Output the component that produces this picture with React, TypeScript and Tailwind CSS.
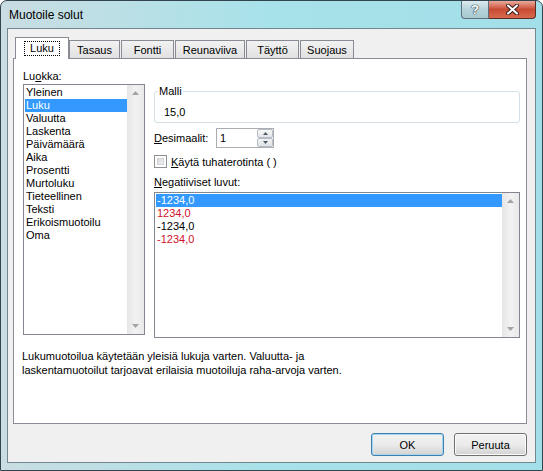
import React from "react";

const CATEGORIES = [
  "Yleinen",
  "Luku",
  "Valuutta",
  "Laskenta",
  "Päivämäärä",
  "Aika",
  "Prosentti",
  "Murtoluku",
  "Tieteellinen",
  "Teksti",
  "Erikoismuotoilu",
  "Oma",
];

const NEGATIVES = [
  { text: "-1234,0", red: false },
  { text: "1234,0", red: true },
  { text: "-1234,0", red: false },
  { text: "-1234,0", red: true },
];

const TABS = [
  { label: "Luku", w: "w-[54px]" },
  { label: "Tasaus", w: "w-[51px]" },
  { label: "Fontti", w: "w-[53px]" },
  { label: "Reunaviiva", w: "w-[70px]" },
  { label: "Täyttö", w: "w-[53px]" },
  { label: "Suojaus", w: "w-[54px]" },
];

function Arrow({ up }: { up: boolean }) {
  return (
    <svg width="7" height="4" viewBox="0 0 7 4">
      <path d={up ? "M0 4 L3.5 0 L7 4 Z" : "M0 0 L3.5 4 L7 0 Z"} fill="#a3a3a3" />
    </svg>
  );
}

function Scrollbar() {
  return (
    <div className="flex w-[17px] flex-col items-center justify-between bg-gradient-to-r from-[#e6e6e6] via-[#f2f2f2] to-[#e9e9e9] py-[6px]">
      <Arrow up />
      <Arrow up={false} />
    </div>
  );
}

function Tab({ label, w, active }: { label: string; w: string; active: boolean }) {
  if (active) {
    return (
      <div
        className={`${w} relative z-10 -mb-px flex h-[22px] items-start justify-center border border-b-0 border-[#898c95] bg-white pt-[4px]`}
      >
        <span className="px-[5px] leading-[13px] outline-1 outline-dotted outline-black">{label}</span>
      </div>
    );
  }
  return (
    <div
      className={`${w} mr-px flex h-[18px] items-center justify-center border border-b-0 border-[#898c95] bg-gradient-to-b from-[#f2f2f2] to-[#e1e1e1] pt-[1px]`}
    >
      {label}
    </div>
  );
}

function Button({ label, primary }: { label: string; primary?: boolean }) {
  return (
    <button
      className={`flex h-[23px] w-[73px] items-center justify-center rounded-[3px] border bg-gradient-to-b from-[#f2f2f2] via-[#ebebeb] to-[#d3d3d3] ${
        primary ? "border-[#3c7fb1] shadow-[inset_0_0_0_1px_#a7d5f0]" : "border-[#707070] shadow-[inset_0_0_0_1px_#fbfbfb]"
      }`}
    >
      {label}
    </button>
  );
}

export default function App() {
  return (
    <div className="h-[471px] w-[543px] bg-white font-['Liberation_Sans',Arial,sans-serif] text-[11px] leading-[14px] text-black">
      <div className="flex h-[471px] w-[543px] flex-col rounded-t-[7px] border border-[#33444e] bg-gradient-to-r from-[#c9dde2] via-[#a7e2ea] to-[#a3dfe8]">
        {/* Title bar */}
        <div className="flex h-[27px] items-start">
          <span className="ml-[8px] mt-[7px] text-[12px]">Muotoile solut</span>
          <div className="ml-auto mr-[6px] flex">
            <div className="flex h-[18px] w-[28px] items-center justify-center rounded-bl-[4px] border border-t-0 border-[#5d6f7c] bg-gradient-to-b from-[#dcebef] via-[#b7d3da] to-[#a8c8d0] text-[13px] font-bold text-white [text-shadow:0_0_1px_#2a3a48,0_0_1px_#2a3a48,0_0_1px_#2a3a48]">
              ?
            </div>
            <div className="flex h-[18px] w-[47px] items-center justify-center rounded-br-[4px] border border-l-0 border-t-0 border-[#5a2c25] bg-gradient-to-b from-[#e9a99b] via-[#c94a34] to-[#d86a4c]">
              <svg width="13" height="11" viewBox="0 0 13 11">
                <path d="M2 1.5 L11 9.5 M11 1.5 L2 9.5" stroke="#3a2320" strokeWidth="4" strokeLinecap="round" />
                <path d="M2 1.5 L11 9.5 M11 1.5 L2 9.5" stroke="#ffffff" strokeWidth="2" strokeLinecap="round" />
              </svg>
            </div>
          </div>
        </div>

        {/* Client area */}
        <div className="mx-[6px] h-[435px] border border-[#72878f] bg-[#f0f0f0]">
          {/* Tabs */}
          <div className="ml-[7px] mt-[8px] flex h-[21px] items-end">
            {TABS.map((t, i) => (
              <Tab key={t.label} label={t.label} w={t.w} active={i === 0} />
            ))}
          </div>

          {/* Panel */}
          <div className="ml-[5px] h-[366px] w-[514px] border border-[#898c95] bg-white">
            <div className="flex items-start">
              {/* Left column */}
              <div className="ml-[9px] flex w-[122px] flex-col pt-[10px]">
                <span>
                  Lu<span className="underline">o</span>kka:
                </span>
                <div className="mt-px flex h-[251px] border border-[#828790] bg-white">
                  <div className="flex-1 pl-px pt-px">
                    {CATEGORIES.map((c, i) => (
                      <div
                        key={c}
                        className={`h-[13px] pl-px leading-[13px] ${i === 1 ? "bg-[#3399ff] text-white" : ""}`}
                      >
                        {c}
                      </div>
                    ))}
                  </div>
                  <Scrollbar />
                </div>
              </div>

              {/* Right column */}
              <div className="ml-[9px] flex w-[366px] flex-col">
                <div className="relative mt-[32px] h-[32px] rounded-[3px] border border-[#d5dfe5] pl-[9px] pt-[13px]">
                  <span className="absolute left-[3px] top-[-8px] bg-white px-[1px]">Malli</span>
                  15,0
                </div>

                <div className="mt-[5px] flex items-center">
                  <span className="w-[62px]">
                    <span className="underline">D</span>esimaalit:
                  </span>
                  <div className="flex h-[20px] w-[58px] border border-[#abadb3] bg-white">
                    <span className="flex-1 pl-[3px] leading-[18px]">1</span>
                    <div className="flex w-[16px] flex-col">
                      <div className="flex h-[9px] items-center justify-center rounded-[2px] border border-[#b6bcc6] bg-gradient-to-b from-[#f7f7f7] to-[#e2e5ea]">
                        <svg width="5" height="3" viewBox="0 0 5 3">
                          <path d="M0 3 L2.5 0 L5 3 Z" fill="#4d5a66" />
                        </svg>
                      </div>
                      <div className="flex h-[9px] items-center justify-center rounded-[2px] border border-[#b6bcc6] bg-gradient-to-b from-[#f2f2f2] to-[#dfe2e7]">
                        <svg width="5" height="3" viewBox="0 0 5 3">
                          <path d="M0 0 L2.5 3 L5 0 Z" fill="#4d5a66" />
                        </svg>
                      </div>
                    </div>
                  </div>
                </div>

                <div className="mt-[7px] flex h-[13px] items-center">
                  <div className="h-[13px] w-[13px] border border-[#8e8f8f] bg-white p-[2px]">
                    <div className="h-full w-full border border-[#d0d3d8] bg-gradient-to-br from-[#d4d7dc] to-[#f4f4f4]" />
                  </div>
                  <span className="ml-[4px]">
                    <span className="underline">K</span>äytä tuhaterotinta ( )
                  </span>
                </div>

                <span className="mt-[7px]">
                  <span className="underline">N</span>egatiiviset luvut:
                </span>
                <div className="mt-[3px] flex h-[146px] border border-[#828790] bg-white">
                  <div className="flex-1 pl-px pt-px">
                    {NEGATIVES.map((n, i) => (
                      <div
                        key={i}
                        className={`h-[13px] pl-px leading-[13px] ${
                          i === 0 ? "bg-[#3399ff] text-white" : n.red ? "text-[#d0112b]" : ""
                        }`}
                      >
                        {n.text}
                      </div>
                    ))}
                  </div>
                  <Scrollbar />
                </div>
              </div>
            </div>

            <p className="ml-[8px] mt-[11px]">
              Lukumuotoilua käytetään yleisiä lukuja varten. Valuutta- ja
              <br />
              laskentamuotoilut tarjoavat erilaisia muotoiluja raha-arvoja varten.
            </p>
          </div>

          {/* Buttons */}
          <div className="ml-[5px] mt-[9px] flex w-[514px] justify-end gap-[10px]">
            <Button label="OK" primary />
            <Button label="Peruuta" />
          </div>
        </div>
      </div>
    </div>
  );
}
